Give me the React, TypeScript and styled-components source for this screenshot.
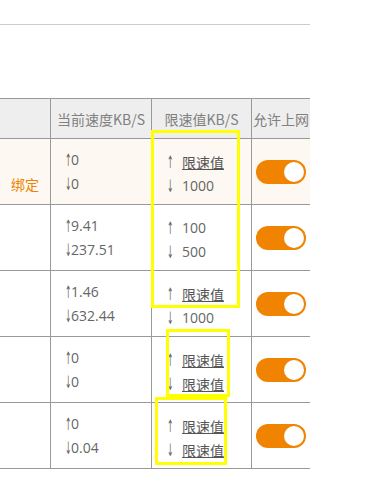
import React from 'react';
import styled, { createGlobalStyle } from 'styled-components';

const GlobalStyle = createGlobalStyle`
  body {
    margin: 0;
    background: #ffffff;
    font-family: "Open Sans", "Liberation Sans", "Noto Sans CJK SC", sans-serif;
  }
`

type Limit = string | null

type Device = {
  action?: string
  up: string
  down: string
  limitUp: Limit
  limitDown: Limit
  active?: boolean
}

const devices: Device[] = [
  { action: '绑定', up: '0', down: '0', limitUp: null, limitDown: '1000', active: true },
  { up: '9.41', down: '237.51', limitUp: '100', limitDown: '500' },
  { up: '1.46', down: '632.44', limitUp: null, limitDown: '1000' },
  { up: '0', down: '0', limitUp: null, limitDown: null },
  { up: '0', down: '0.04', limitUp: null, limitDown: null },
]

const LimitValue: React.FC<{ value: Limit }> = ({ value }) =>
  value ? <Plain>{value}</Plain> : <SetLink>限速值</SetLink>

export default function App() {
  return (
    <Page>
      <GlobalStyle />
      <TopBar />
      <Table>
        <HeadRow>
          <HeadCell />
          <HeadCell>当前速度KB/S</HeadCell>
          <HeadCell>限速值KB/S</HeadCell>
          <HeadCell $last>允许上网</HeadCell>
        </HeadRow>
        {devices.map((d, i) => (
          <Row key={i} $active={d.active}>
            <ActionCell>
              <Line />
              <Line>{d.action && <Bind>{d.action}</Bind>}</Line>
            </ActionCell>
            <SpeedCell>
              <Line><Arrow>↑</Arrow>{d.up}</Line>
              <Line><Arrow>↓</Arrow>{d.down}</Line>
            </SpeedCell>
            <LimitCell>
              <Line><Arrow $w={15}>↑</Arrow><LimitValue value={d.limitUp} /></Line>
              <Line><Arrow $w={15}>↓</Arrow><LimitValue value={d.limitDown} /></Line>
            </LimitCell>
            <SwitchCell>
              <Toggle><Knob /></Toggle>
            </SwitchCell>
          </Row>
        ))}
      </Table>
      <Mark $x={151} $y={130} $w={89} $h={178} />
      <Mark $x={166} $y={329} $w={64} $h={68} />
      <Mark $x={155} $y={397} $w={72} $h={68} />
    </Page>
  )
}

const Page = styled.div`
  position: relative;
  width: 310px;
  overflow: hidden;
  height: 482px;
`

const TopBar = styled.div`
  height: 24px;
  border-bottom: 1px solid #cccccc;
  margin-bottom: 73px;
`

const Table = styled.div`
  border-top: 1px solid #999999;
`

const grid = `
  display: grid;
  grid-template-columns: 51px 101px 100px 1fr;
  border-bottom: 1px solid #999999;
`

const HeadRow = styled.div`
  ${grid}
  height: 39px;
  background: #eeeeee;
`

const HeadCell = styled.div<{ $last?: boolean }>`
  display: flex;
  align-items: center;
  justify-content: center;
  white-space: nowrap;
  border-right: ${p => (p.$last ? 'none' : '1px solid #999999')};
  color: #808080;
  font-family: "Noto Sans CJK SC", sans-serif;
  font-size: 14px;
`

const Row = styled.div<{ $active?: boolean }>`
  ${grid}
  height: 65px;
  background: ${p => (p.$active ? '#fdf8f2' : '#ffffff')};
`

const Cell = styled.div`
  display: flex;
  flex-direction: column;
  justify-content: center;
  border-right: 1px solid #999999;
  font-size: 14px;
  color: #666666;
`

const ActionCell = styled(Cell)`
  align-items: center;
`

const SpeedCell = styled(Cell)`
  padding-left: 14px;
`

const LimitCell = styled(Cell)`
  padding-left: 15px;
  padding-top: 4px;
`

const SwitchCell = styled.div`
  display: flex;
  align-items: center;
  justify-content: center;
`

const Line = styled.div`
  height: 24px;
  line-height: 24px;
  white-space: nowrap;
`

const Bind = styled.span`
  color: #f08300;
  font-family: "Noto Sans CJK SC", sans-serif;
`

const Arrow = styled.span<{ $w?: number }>`
  display: inline-block;
  width: ${p => (p.$w ? `${p.$w}px` : '6px')};
  overflow: visible;
  font-family: "DejaVu Sans", sans-serif;
  font-size: 17px;
  line-height: 24px;
  vertical-align: top;
  transform: scaleX(0.45);
  transform-origin: left center;
`

const Plain = styled.span``

const SetLink = styled.span`
  color: #555555;
  text-decoration: underline;
  font-family: "Noto Sans CJK SC", sans-serif;
  cursor: pointer;
`

const Toggle = styled.div`
  width: 50px;
  height: 24px;
  border-radius: 12px;
  background: #f08300;
  display: flex;
  align-items: center;
  justify-content: flex-end;
  padding-right: 2px;
  box-sizing: border-box;
`

const Knob = styled.div`
  width: 20px;
  height: 20px;
  border-radius: 50%;
  background: #ffffff;
`

const Mark = styled.div<{ $x: number; $y: number; $w: number; $h: number }>`
  position: absolute;
  left: ${p => p.$x}px;
  top: ${p => p.$y}px;
  width: ${p => p.$w}px;
  height: ${p => p.$h}px;
  box-sizing: border-box;
  border: 3px solid #ffff00;
  pointer-events: none;
`
